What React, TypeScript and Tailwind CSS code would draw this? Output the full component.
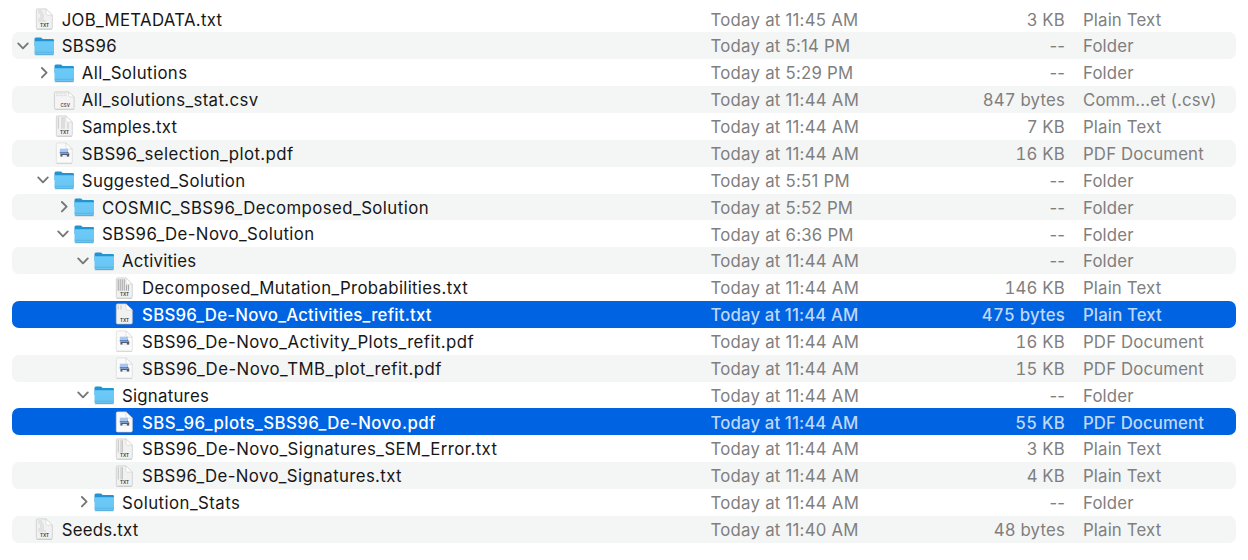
type Kind = 'folder' | 'txt' | 'csv' | 'pdf';
type Lines = 'form' | 'grid' | 'dense' | 'short' | 'column';

interface Entry {
  name: string;
  depth: number;
  kind: Kind;
  date: string;
  size: string;
  type: string;
  open?: boolean;
  selected?: boolean;
  lines?: Lines;
  tracking: string;
}

const entries: Entry[] = [
  { name: 'JOB_METADATA.txt', tracking: 'tracking-[0.3px]', depth: 0, kind: 'txt', date: '11:45 AM', size: '3 KB', type: 'Plain Text', lines: 'form' },
  { name: 'SBS96', tracking: 'tracking-[0.4px]', depth: 0, kind: 'folder', date: '5:14 PM', size: '--', type: 'Folder', open: true },
  { name: 'All_Solutions', tracking: 'tracking-[0.39px]', depth: 1, kind: 'folder', date: '5:29 PM', size: '--', type: 'Folder', open: false },
  { name: 'All_solutions_stat.csv', tracking: 'tracking-[0.38px]', depth: 1, kind: 'csv', date: '11:44 AM', size: '847 bytes', type: 'Comm...et (.csv)' },
  { name: 'Samples.txt', tracking: 'tracking-[0.2px]', depth: 1, kind: 'txt', date: '11:44 AM', size: '7 KB', type: 'Plain Text', lines: 'grid' },
  { name: 'SBS96_selection_plot.pdf', tracking: 'tracking-[0.43px]', depth: 1, kind: 'pdf', date: '11:44 AM', size: '16 KB', type: 'PDF Document' },
  { name: 'Suggested_Solution', tracking: 'tracking-[0.36px]', depth: 1, kind: 'folder', date: '5:51 PM', size: '--', type: 'Folder', open: true },
  { name: 'COSMIC_SBS96_Decomposed_Solution', tracking: 'tracking-[0.44px]', depth: 2, kind: 'folder', date: '5:52 PM', size: '--', type: 'Folder', open: false },
  { name: 'SBS96_De-Novo_Solution', tracking: 'tracking-[0.4px]', depth: 2, kind: 'folder', date: '6:36 PM', size: '--', type: 'Folder', open: true },
  { name: 'Activities', tracking: 'tracking-[0.2px]', depth: 3, kind: 'folder', date: '11:44 AM', size: '--', type: 'Folder', open: true },
  { name: 'Decomposed_Mutation_Probabilities.txt', tracking: 'tracking-[0.32px]', depth: 4, kind: 'txt', date: '11:44 AM', size: '146 KB', type: 'Plain Text', lines: 'dense' },
  { name: 'SBS96_De-Novo_Activities_refit.txt', tracking: 'tracking-[0.23px]', depth: 4, kind: 'txt', date: '11:44 AM', size: '475 bytes', type: 'Plain Text', lines: 'short', selected: true },
  { name: 'SBS96_De-Novo_Activity_Plots_refit.pdf', tracking: 'tracking-[0.41px]', depth: 4, kind: 'pdf', date: '11:44 AM', size: '16 KB', type: 'PDF Document' },
  { name: 'SBS96_De-Novo_TMB_plot_refit.pdf', tracking: 'tracking-[0.46px]', depth: 4, kind: 'pdf', date: '11:44 AM', size: '15 KB', type: 'PDF Document' },
  { name: 'Signatures', tracking: 'tracking-[0.25px]', depth: 3, kind: 'folder', date: '11:44 AM', size: '--', type: 'Folder', open: true },
  { name: 'SBS_96_plots_SBS96_De-Novo.pdf', tracking: 'tracking-[0.43px]', depth: 4, kind: 'pdf', date: '11:44 AM', size: '55 KB', type: 'PDF Document', selected: true },
  { name: 'SBS96_De-Novo_Signatures_SEM_Error.txt', tracking: 'tracking-[0.42px]', depth: 4, kind: 'txt', date: '11:44 AM', size: '3 KB', type: 'Plain Text', lines: 'column' },
  { name: 'SBS96_De-Novo_Signatures.txt', tracking: 'tracking-[0.37px]', depth: 4, kind: 'txt', date: '11:44 AM', size: '4 KB', type: 'Plain Text', lines: 'column' },
  { name: 'Solution_Stats', tracking: 'tracking-[0.45px]', depth: 3, kind: 'folder', date: '11:44 AM', size: '--', type: 'Folder', open: false },
  { name: 'Seeds.txt', tracking: 'tracking-[0.22px]', depth: 0, kind: 'txt', date: '11:40 AM', size: '48 bytes', type: 'Plain Text', lines: 'form' },
];

const indent = ['pl-0', 'pl-[20.1px]', 'pl-[40.2px]', 'pl-[60.3px]', 'pl-[80.4px]'];

function Chevron({ open }: { open?: boolean }) {
  return (
    <svg className="h-5 w-5 shrink-0" viewBox="0 0 20 20" fill="none" stroke="#777" strokeWidth="1.9" strokeLinecap="round" strokeLinejoin="round">
      {open === true && <path d="M6.2 7.4 L11 12.3 L15.8 7.4" />}
      {open === false && <path d="M9.9 5 L14.6 9.7 L9.9 14.4" />}
    </svg>
  );
}

function FolderIcon() {
  return (
    <svg className="h-6 w-6 shrink-0" viewBox="0 0 24 24">
      <defs>
        <linearGradient id="folderFront" x1="0" y1="0" x2="0" y2="1">
          <stop offset="0" stopColor="#6ccbf9" />
          <stop offset="1" stopColor="#69c4f1" />
        </linearGradient>
      </defs>
      <path d="M2.8 20.6 h19 v1 h-19z" fill="#000" opacity=".13" />
      <path d="M2.5 5.1 q0-1.6 1.4-1.6 h4.6 q.8 0 1.3.6 l.7.8 h10.1 q1.4 0 1.4 1.4 V12 H2.5z" fill="#2394cf" />
      <path d="M2.5 7.2 h19.5 v12.3 q0 1.3-1.4 1.3 H3.9 q-1.4 0-1.4-1.3z" fill="url(#folderFront)" />
      <path d="M2.7 18.3 h19.1" stroke="#4fb0e0" strokeWidth=".7" />
      <path d="M3.2 20.5 h18.1" stroke="#45a3d5" strokeWidth=".7" />
    </svg>
  );
}

function SheetLines({ lines }: { lines?: Lines }) {
  if (lines === 'dense')
    return <path d="M6.2 3.2 v11.6 M8.2 3.2 v11.6 M10.2 3.2 v11.6 M12.2 3.2 v11.6 M14.4 8.8 v6 M16.4 8.8 v6" stroke="#a0a0a0" strokeWidth="1" />;
  if (lines === 'grid')
    return <path d="M6.3 3.2 v11.6 M10 3.2 v11.6 M12 3.2 v11.6 M16 8.8 v6" stroke="#c9c9c9" strokeWidth="1" />;
  if (lines === 'column')
    return <path d="M6.3 3.2 v12.3 M9 3.2 v12.3 M10.4 3.2 v12.3" stroke="#c2c2c2" strokeWidth="1" />;
  if (lines === 'short')
    return <path d="M6.2 3.2 v4.3 M9 3.2 v4.3" stroke="#c4c4c4" strokeWidth="1" />;
  return <path d="M6 4 h4 M6 6 h5 M8 8 h4 M8 10 h4 M6 12 h6 M6 14 h8" stroke="#cdcdcd" strokeWidth=".8" />;
}

function FileIcon({ kind, lines }: { kind: Kind; lines?: Lines }) {
  if (kind === 'csv')
    return (
      <svg className="h-6 w-6 shrink-0" viewBox="0 0 24 24">
        <path d="M3 21.6 h19" stroke="#000" strokeWidth=".8" opacity=".16" />
        <path d="M2.4 5.3 q0-1.3 1.3-1.3 h13.1 l5.3 5 v10.9 q0 1.3-1.3 1.3 H3.7 q-1.3 0-1.3-1.3z" fill="#f4f4f4" stroke="#c2c2c2" strokeWidth=".7" />
        <path d="M16.8 4 v3.7 q0 1.3 1.3 1.3 h4z" fill="#fff" stroke="#cfcfcf" strokeWidth=".6" />
        <path d="M4 5.8 h11 M4 7.6 h11" stroke="#d6d6d6" strokeWidth=".7" strokeDasharray="2 .6" />
        <text x="13.2" y="18.5" textAnchor="middle" className="fill-[#444] font-['Inter'] text-[4.4px] font-semibold">CSV</text>
      </svg>
    );
  return (
    <svg className="h-6 w-6 shrink-0" viewBox="0 0 24 24">
      <path d="M4.6 22.5 h15.4" stroke="#000" strokeWidth=".8" opacity=".18" />
      <path
        d="M4.3 3.2 q0-1.3 1.3-1.3 h8.4 l6.3 6.2 v12.6 q0 1.3-1.3 1.3 H5.6 q-1.3 0-1.3-1.3z"
        fill={kind === 'pdf' ? '#fafafa' : '#f1f1f1'}
        stroke={kind === 'pdf' ? '#dadada' : '#c6c6c6'}
        strokeWidth=".7"
      />
      {kind === 'txt' && <SheetLines lines={lines} />}
      <path d="M14 1.9 v4.8 q0 1.4 1.4 1.4 h4.9z" fill="#fff" stroke="#cfcfcf" strokeWidth=".6" />
      {kind === 'txt' ? (
        <text x="12.5" y="19.5" textAnchor="middle" className="fill-[#333] font-['Inter'] text-[4.6px] font-semibold">TXT</text>
      ) : (
        <g>
          <path d="M7.8 7.7 h8.2 v5 H7.8z" fill="#a9c6f0" />
          <path d="M7.8 11 h8.2 v1.5 H7.8z" fill="#5c86c5" />
          <path d="M8.4 12.8 h8.8 v2.8 H8.4z" fill="#555b68" />
          <path d="M10.4 14 h4.4 v2.3 h-4.4z" fill="#e9edf4" />
          <path d="M15.5 11.2 l1.7 1.5" stroke="#333" strokeWidth=".8" />
        </g>
      )}
    </svg>
  );
}

function Row({ entry, striped }: { entry: Entry; striped: boolean }) {
  const sel = entry.selected;
  const background = sel ? 'bg-[#0063e1]' : striped ? 'bg-[#f4f5f5]' : 'bg-white';
  const secondary = sel ? 'text-[#bfd8f8] font-medium' : 'text-[#7f7f7f]';
  const dateTracking = sel ? 'tracking-[0.12px]' : 'tracking-[0.24px]';
  const typeTracking = sel ? 'tracking-[0.1px]' : 'tracking-[0.15px]';
  const digits = entry.kind === 'folder' ? 'tracking-normal' : 'tracking-[0.18px] tabular-nums';
  return (
    <div className={`flex h-[26.87px] shrink-0 items-center rounded-[7px] whitespace-nowrap ${background}`}>
      <div className={`flex w-[698.5px] shrink-0 items-center ${indent[entry.depth]}`}>
        <Chevron open={entry.open} />
        {entry.kind === 'folder' ? <FolderIcon /> : <FileIcon kind={entry.kind} lines={entry.lines} />}
        <span className={`pt-[2.2px] pl-[5.7px] ${entry.tracking} ${sel ? 'font-medium text-white' : 'text-[#171717]'}`}>{entry.name}</span>
      </div>
      <div className={`w-[200px] shrink-0 pt-[2.2px] ${dateTracking} ${secondary}`}>Today at {entry.date}</div>
      <div className={`w-[154.5px] shrink-0 pt-[2.2px] text-right ${digits} ${secondary}`}>{entry.size}</div>
      <div className={`pt-[2.2px] pl-[18px] ${typeTracking} ${secondary}`}>{entry.type}</div>
    </div>
  );
}

export default function App() {
  return (
    <main className="flex h-[560px] w-[1248px] flex-col overflow-hidden bg-white pt-[5.5px] pr-3 pl-3 font-['Inter',sans-serif] text-[16.8px] leading-none">
      {entries.map((entry, i) => (
        <Row key={entry.name} entry={entry} striped={i % 2 === 1} />
      ))}
    </main>
  );
}
